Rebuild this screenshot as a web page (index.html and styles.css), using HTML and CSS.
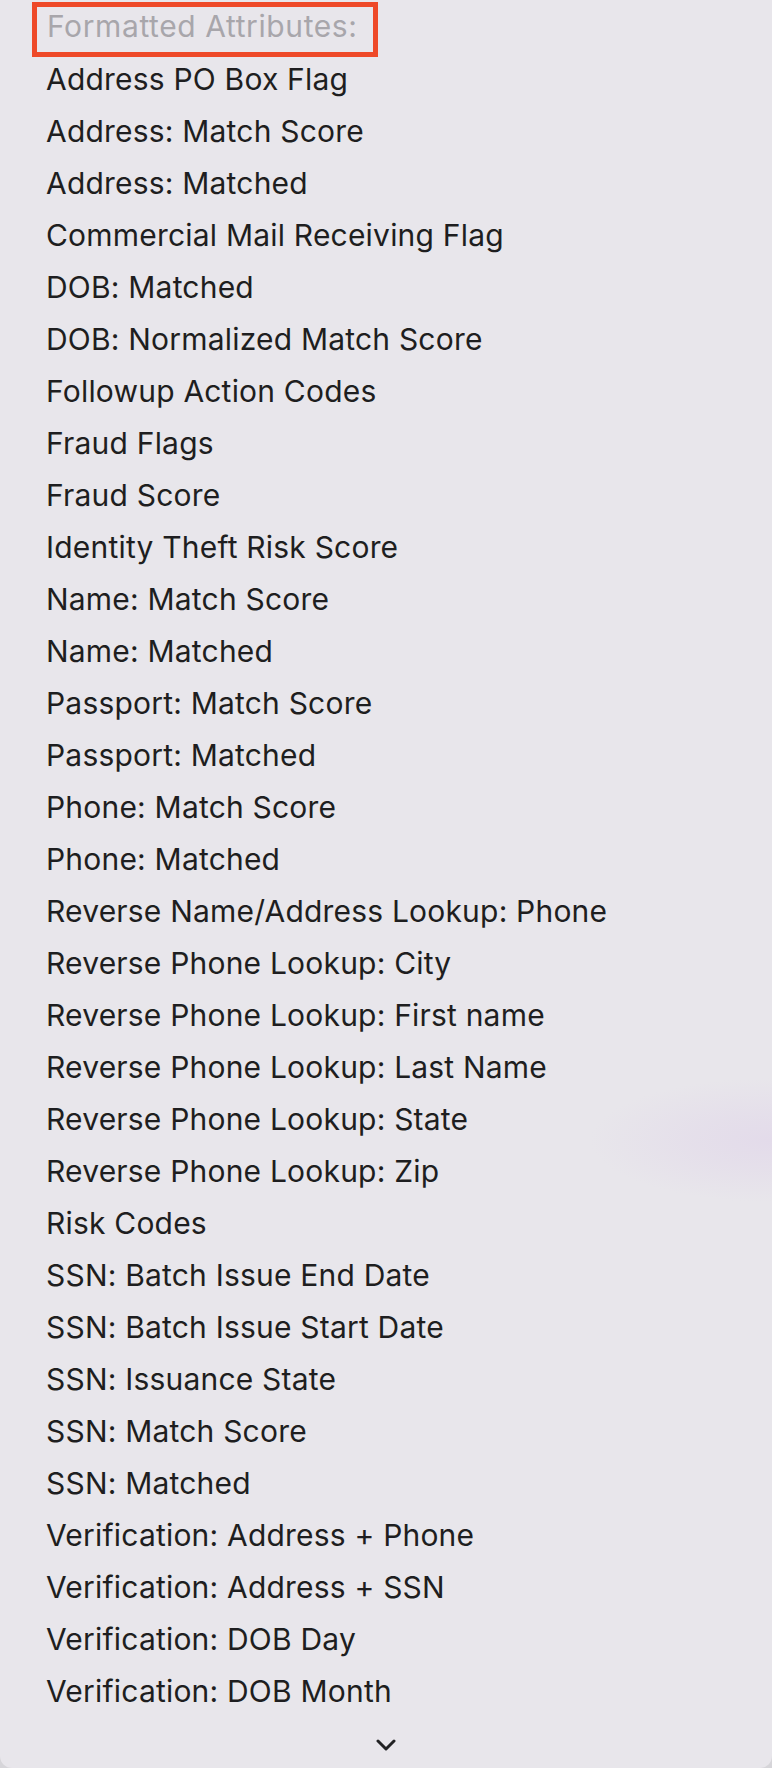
FILE: index.html
```html
<!DOCTYPE html>
<html>
<head>
<meta charset="utf-8">
<link rel="stylesheet" href="styles.css">
</head>
<body>
<div class="menu">
  <div class="header"><span class="header-box">Formatted Attributes:</span></div>
  <ul class="items">
    <li>Address PO Box Flag</li>
    <li>Address: Match Score</li>
    <li>Address: Matched</li>
    <li>Commercial Mail Receiving Flag</li>
    <li>DOB: Matched</li>
    <li>DOB: Normalized Match Score</li>
    <li>Followup Action Codes</li>
    <li>Fraud Flags</li>
    <li>Fraud Score</li>
    <li>Identity Theft Risk Score</li>
    <li>Name: Match Score</li>
    <li>Name: Matched</li>
    <li>Passport: Match Score</li>
    <li>Passport: Matched</li>
    <li>Phone: Match Score</li>
    <li>Phone: Matched</li>
    <li>Reverse Name/Address Lookup: Phone</li>
    <li>Reverse Phone Lookup: City</li>
    <li>Reverse Phone Lookup: First name</li>
    <li>Reverse Phone Lookup: Last Name</li>
    <li>Reverse Phone Lookup: State</li>
    <li>Reverse Phone Lookup: Zip</li>
    <li>Risk Codes</li>
    <li>SSN: Batch Issue End Date</li>
    <li>SSN: Batch Issue Start Date</li>
    <li>SSN: Issuance State</li>
    <li>SSN: Match Score</li>
    <li>SSN: Matched</li>
    <li>Verification: Address + Phone</li>
    <li>Verification: Address + SSN</li>
    <li>Verification: DOB Day</li>
    <li>Verification: DOB Month</li>
  </ul>
  <div class="more">
    <svg width="20" height="13" viewBox="0 0 20 13"><polyline points="2,2 10,10 18,2" fill="none" stroke="#222224" stroke-width="3" stroke-linecap="round" stroke-linejoin="round"/></svg>
  </div>
</div>
</body>
</html>
```
FILE: styles.css
```css
html, body {
  margin: 0;
  padding: 0;
  background: #d6d5d9;
}
body {
  width: 772px;
  height: 1768px;
  overflow: hidden;
  font-family: Inter, "Noto Sans", sans-serif;
}
.menu {
  height: 1768px;
  box-sizing: border-box;
  background:
    radial-gradient(ellipse 180px 62px at 770px 1140px, #e3dbea 0%, rgba(227,219,234,0.6) 45%, rgba(232,230,235,0) 100%),
    #e8e6eb;
  border-radius: 0 0 12px 12px;
  padding-top: 2px;
}
.header {
  padding-left: 32px;
  margin-bottom: -4px;
}
.header-box {
  display: inline-block;
  border: 5px solid #ee4928;
  padding: 0 15px 7px 10px;
  font-size: 30px;
  line-height: 38px;
  letter-spacing: 0.6px;
  color: #a8a6ab;
}
.items {
  list-style: none;
  margin: 0;
  padding: 0 0 0 46px;
}
.items li {
  font-size: 30px;
  line-height: 52px;
  letter-spacing: 0.2px;
  color: #1e1e20;
  white-space: nowrap;
}
.more {
  display: flex;
  justify-content: center;
  padding-top: 22px;
}
.more svg {
  display: block;
}
```
